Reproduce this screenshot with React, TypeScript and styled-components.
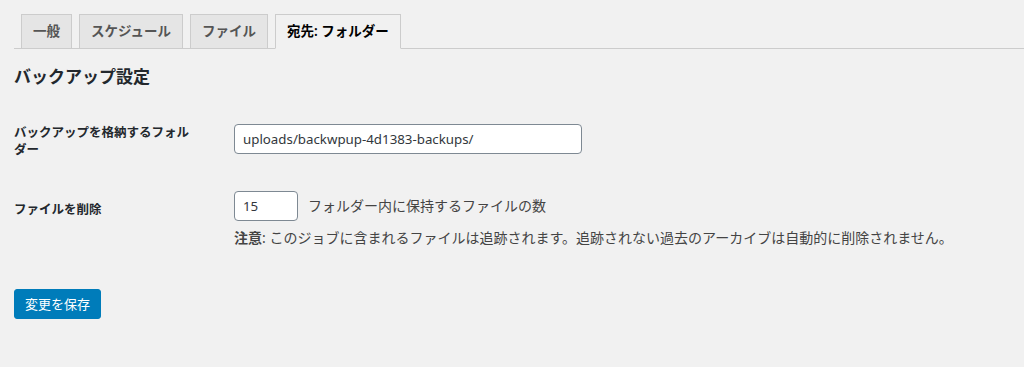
import * as React from 'react';
import styled, { createGlobalStyle } from 'styled-components';

const GlobalStyle = createGlobalStyle`
  html, body {
    margin: 0;
    padding: 0;
    background: #f1f1f1;
  }
  body {
    font-family: "Noto Sans", "Noto Sans CJK JP", sans-serif;
    font-size: 13px;
    color: #444;
    height: 367px;
    overflow: hidden;
  }
`;

const Wrap = styled.div`
  padding: 14px 0 0 14px;
`;

const TabBar = styled.nav`
  display: flex;
  gap: 7px;
  padding-left: 7px;
  border-bottom: 1px solid #ccc;
  height: 34px;
`;

const Tab = styled.a<{ active?: boolean }>`
  display: block;
  box-sizing: border-box;
  height: ${(p) => (p.active ? '35px' : '34px')};
  padding: 0 11px;
  border: 1px solid #ccc;
  border-bottom: ${(p) => (p.active ? '1px solid #f1f1f1' : 'none')};
  background: ${(p) => (p.active ? '#f1f1f1' : '#e5e5e5')};
  color: ${(p) => (p.active ? '#000' : '#555')};
  font-size: 13.5px;
  font-weight: 600;
  line-height: 32px;
  text-decoration: none;
  white-space: nowrap;
`;

const Heading = styled.h2`
  margin: 17px 0 0;
  font-size: 17px;
  line-height: 22px;
  font-weight: 600;
  color: #23282d;
`;

const FormTable = styled.table`
  border-collapse: collapse;
  margin-top: 21px;
`;

const Label = styled.th<{ pad: number }>`
  width: 180px;
  padding: ${(p) => p.pad}px 30px 18px 0;
  text-align: left;
  vertical-align: top;
  font-size: 12.5px;
  font-weight: 600;
  line-height: 17px;
  color: #23282d;
`;

const Field = styled.td`
  padding: 15px 10px;
  vertical-align: top;
  line-height: 1.3;
`;

const Input = styled.input<{ w: number }>`
  box-sizing: border-box;
  width: ${(p) => p.w}px;
  height: 30px;
  padding: 0 8px;
  border: 1px solid #7e8993;
  border-radius: 4px;
  background: #fff;
  color: #32373c;
  font-family: "Noto Sans", sans-serif;
  font-size: 13.3px;
  box-shadow: none;
  outline: none;
`;

const InlineRow = styled.div`
  display: flex;
  align-items: center;
  gap: 10px;
  font-size: 14px;
  color: #444;
`;

const Description = styled.p`
  margin: 8px 0 0;
  font-size: 14px;
  line-height: 17px;
  color: #444;
  white-space: nowrap;

  strong {
    font-weight: 700;
  }
`;

const Submit = styled.div`
  padding-top: 28px;
`;

const PrimaryButton = styled.button`
  height: 30px;
  padding: 0 10px;
  border: 1px solid #007cba;
  border-radius: 3px;
  background: #007cba;
  color: #fff;
  font-family: "Noto Sans", "Noto Sans CJK JP", sans-serif;
  font-size: 13px;
  line-height: 28px;
  cursor: pointer;
`;

const tabs = ['一般', 'スケジュール', 'ファイル', '宛先: フォルダー'];

export default function App() {
  return (
    <Wrap>
      <GlobalStyle />
      <TabBar>
        {tabs.map((t, i) => (
          <Tab key={t} href="#" active={i === tabs.length - 1}>
            {t}
          </Tab>
        ))}
      </TabBar>
      <Heading>バックアップ設定</Heading>
      <FormTable>
        <tbody>
          <tr>
            <Label pad={15}>バックアップを格納するフォルダー</Label>
            <Field>
              <Input w={348} defaultValue="uploads/backwpup-4d1383-backups/" />
            </Field>
          </tr>
          <tr>
            <Label pad={25}>ファイルを削除</Label>
            <Field>
              <InlineRow>
                <Input w={64} defaultValue="15" />
                フォルダー内に保持するファイルの数
              </InlineRow>
              <Description>
                <strong>注意</strong>: このジョブに含まれるファイルは追跡されます。追跡されない過去のアーカイブは自動的に削除されません。
              </Description>
            </Field>
          </tr>
        </tbody>
      </FormTable>
      <Submit>
        <PrimaryButton>変更を保存</PrimaryButton>
      </Submit>
    </Wrap>
  );
}
